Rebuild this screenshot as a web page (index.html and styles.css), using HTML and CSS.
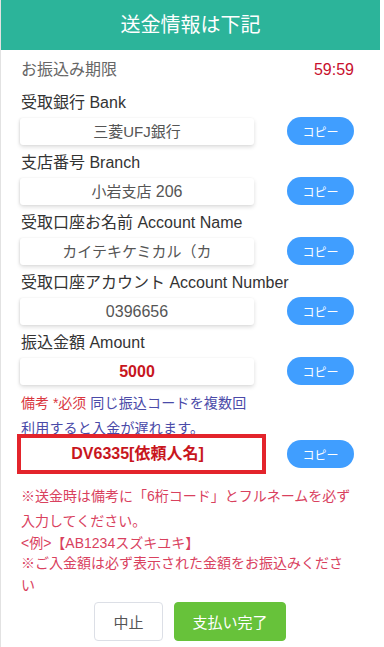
FILE: index.html
```html
<!DOCTYPE html>
<html lang="ja">
<head>
<meta charset="utf-8">
<title>送金情報は下記</title>
<link rel="stylesheet" href="styles.css">
</head>
<body>
<div class="page">
  <div class="header">送金情報は下記</div>
  <div class="content">
    <div class="timer-row">
      <span class="timer-label">お振込み期限</span>
      <span class="timer">59:59</span>
    </div>

    <div class="field">
      <div class="label">受取銀行 Bank</div>
      <div class="row">
        <div class="box">三菱UFJ銀行</div>
        <button class="copy">コピー</button>
      </div>
    </div>

    <div class="field">
      <div class="label">支店番号 Branch</div>
      <div class="row">
        <div class="box">小岩支店 <span class="num">206</span></div>
        <button class="copy">コピー</button>
      </div>
    </div>

    <div class="field">
      <div class="label">受取口座お名前 Account Name</div>
      <div class="row">
        <div class="box">カイテキケミカル（カ</div>
        <button class="copy">コピー</button>
      </div>
    </div>

    <div class="field">
      <div class="label">受取口座アカウント Account Number</div>
      <div class="row">
        <div class="box"><span class="num">0396656</span></div>
        <button class="copy">コピー</button>
      </div>
    </div>

    <div class="field">
      <div class="label">振込金額 Amount</div>
      <div class="row">
        <div class="box amount">5000</div>
        <button class="copy">コピー</button>
      </div>
    </div>

    <div class="remark"><span class="req">備考 *必须</span> <span class="warn">同じ振込コードを複数回利用すると入金が遅れます。</span></div>

    <div class="row code-row">
      <div class="code-box">DV6335[依頼人名]</div>
      <button class="copy">コピー</button>
    </div>

    <p class="note n1">※送金時は備考に「6桁コード」とフルネームを必ず入力してください。</p>
    <p class="note n2">&lt;例&gt;【AB1234スズキユキ】</p>
    <p class="note n3">※ご入金額は必ず表示された金額をお振込みください</p>

    <div class="actions">
      <button class="btn cancel">中止</button>
      <button class="btn done">支払い完了</button>
    </div>
  </div>
</div>
</body>
</html>
```

FILE: styles.css
```css
* { box-sizing: border-box; }
html, body { margin: 0; padding: 0; background: #fff; }
body {
  font-family: "Liberation Sans", Arial, "Noto Sans CJK JP", sans-serif;
  color: #333;
}
.page {
  width: 380px;
  min-height: 647px;
  border-left: 1px solid #e2e2e2;
}
.header {
  height: 50px;
  background: #2cb49a;
  color: #fff;
  font-size: 20px;
  line-height: 50px;
  text-align: center;
}
.content {
  padding: 10px 26px 0 19px;
}
.timer-row {
  display: flex;
  justify-content: space-between;
  height: 20px;
  line-height: 20px;
  font-size: 16px;
  margin-bottom: 13px;
}
.timer-label { color: #666; padding-left: 1px; }
.timer { color: #c8102e; }
.field {
  margin-bottom: 8px;
}
.label {
  font-size: 16px;
  line-height: 20px;
  height: 20px;
  color: #333;
  margin-bottom: 4px;
  padding-left: 1px;
  white-space: nowrap;
}
.row {
  display: flex;
  align-items: center;
  justify-content: space-between;
}
.box {
  width: 234px;
  height: 27px;
  line-height: 27px;
  text-align: center;
  font-size: 15px;
  color: #555;
  background: #fff;
  border-radius: 3px;
  box-shadow: 0 2px 4px rgba(0, 0, 0, 0.14), -1px 0 2px rgba(0, 0, 0, 0.06);
  white-space: nowrap;
  overflow: hidden;
}
.num { font-size: 16px; }
.box.amount {
  color: #c8161d;
  font-weight: bold;
  font-size: 16px;
}
.copy {
  width: 67px;
  height: 28px;
  border: none;
  border-radius: 14px;
  background: #409eff;
  color: #fff;
  font-family: inherit;
  font-size: 12px;
  padding: 0;
  cursor: pointer;
}
.remark {
  width: 234px;
  height: 43px;
  margin-top: -2px;
  font-size: 14px;
  line-height: 25px;
  padding-left: 1px;
}
.req { color: #d9363e; }
.warn { color: #4a4aa8; letter-spacing: 0.2px; }
.code-row {
  position: relative;
  margin-left: -3px;
}
.code-box {
  width: 249px;
  height: 40px;
  border: 4px solid #e3242b;
  background: #fff;
  color: #c8161d;
  font-weight: bold;
  font-size: 16px;
  line-height: 32px;
  text-align: center;
  padding-right: 8px;
}
.note {
  margin: 0;
  color: #d9415e;
  font-size: 14px;
  padding-left: 1px;
}
.n1 { line-height: 25px; margin-top: 10px; }
.n2 { line-height: 18px; }
.n3 { line-height: 22px; }
.actions {
  display: flex;
  justify-content: center;
  gap: 11px;
  margin-top: 6px;
  padding-left: 6px;
}
.btn {
  height: 39px;
  border-radius: 4px;
  font-family: inherit;
  font-size: 15px;
  padding: 0;
  cursor: pointer;
}
.cancel {
  width: 69px;
  background: #fff;
  border: 1px solid #dcdfe6;
  color: #555;
}
.done {
  width: 112px;
  background: #67c23a;
  border: 1px solid #67c23a;
  color: #fff;
}
```
